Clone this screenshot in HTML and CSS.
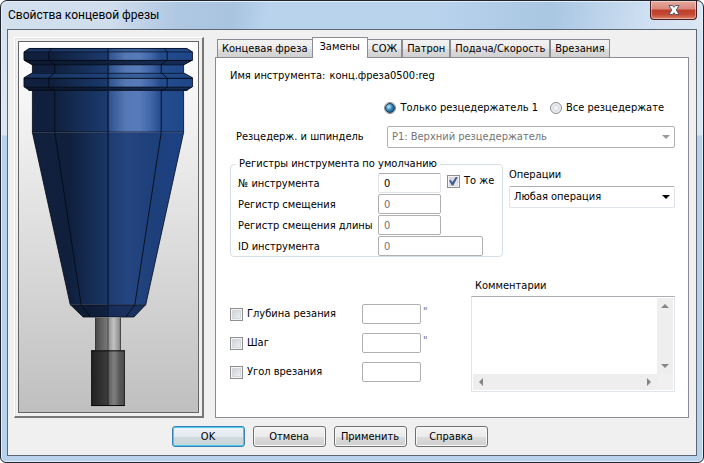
FILE: index.html
```html
<!DOCTYPE html>
<html lang="ru">
<head>
<meta charset="utf-8">
<title>Свойства концевой фрезы</title>
<link rel="stylesheet" href="styles.css">
</head>
<body>
<main class="window">
  <header class="titlebar">
    <h1 class="title">Свойства концевой фрезы</h1>
    <button class="close" type="button" aria-label="Закрыть">
      <svg width="12" height="10" viewBox="0 0 12 10"><path d="M1 .5h3.500L6 2.300 7.500 .5H11L8.300 5 11 9.500H7.500L6 7.700 4.500 9.500H1L3.700 5z" fill="#fff" stroke="#53586b" stroke-width="1"/></svg>
    </button>
  </header>
  <form class="client">
    <div class="content">
      <div class="viewer">
        <svg class="tool" viewBox="19 42 179 372" role="img" aria-label="Концевая фреза">
          <defs>
            <linearGradient id="body" gradientUnits="userSpaceOnUse" x1="24" y1="0" x2="193" y2="0">
              <stop offset="0" stop-color="#10203d"/><stop offset=".17" stop-color="#0f1f3d"/>
              <stop offset=".18" stop-color="#10213f"/><stop offset=".49" stop-color="#1b3a6e"/>
              <stop offset=".51" stop-color="#34558f"/><stop offset=".6" stop-color="#5478b4"/>
              <stop offset=".68" stop-color="#587cbb"/><stop offset=".76" stop-color="#3e63a5"/>
              <stop offset=".81" stop-color="#244b8c"/><stop offset=".83" stop-color="#234c8d"/>
              <stop offset="1" stop-color="#1e468a"/>
            </linearGradient>
            <linearGradient id="cone" gradientUnits="userSpaceOnUse" x1="32" y1="0" x2="184" y2="0">
              <stop offset="0" stop-color="#10203d"/><stop offset=".24" stop-color="#0f1f3c"/>
              <stop offset=".49" stop-color="#193564"/><stop offset=".52" stop-color="#1f3d73"/>
              <stop offset=".64" stop-color="#24457f"/><stop offset=".8" stop-color="#1d3f7a"/>
              <stop offset="1" stop-color="#1c4285"/>
            </linearGradient>
            <linearGradient id="shade" gradientUnits="userSpaceOnUse" x1="24" y1="0" x2="193" y2="0">
              <stop offset="0" stop-color="#0c182e"/><stop offset=".4" stop-color="#0e1c36"/>
              <stop offset=".65" stop-color="#16294d"/><stop offset="1" stop-color="#142c58"/>
            </linearGradient>
            <linearGradient id="shank" x1="0" x2="1" y1="0" y2="0">
              <stop offset="0" stop-color="#484848"/><stop offset=".46" stop-color="#777"/>
              <stop offset=".52" stop-color="#929292"/><stop offset=".72" stop-color="#c2c2c2"/>
              <stop offset="1" stop-color="#808080"/>
            </linearGradient>
            <linearGradient id="cutter" x1="0" x2="1" y1="0" y2="0">
              <stop offset="0" stop-color="#202020"/><stop offset=".47" stop-color="#3c3c3c"/>
              <stop offset=".53" stop-color="#606060"/><stop offset=".68" stop-color="#808080"/>
              <stop offset=".85" stop-color="#565656"/><stop offset="1" stop-color="#4c4c4c"/>
            </linearGradient>
          </defs>
          <path d="M29 48H187L193 52V60L184 65V73L193 78V87L187 90.500H184V133H32V90.500H29L23.500 87V78L32 73V65L23.500 60V52z" fill="url(#body)"/>
          <path d="M29 48H187L193 52H23.500zM32 73H184L193 78H23.500z" fill="#234985" opacity=".55"/>
          <path d="M23.500 60.500H193L184 65H32zM23.500 87H193L187 90.500H29z" fill="url(#shade)"/>
          <path d="M32 133H184L146 306H70z" fill="url(#cone)"/>
          <path d="M70 306H146L134 318.500H83z" fill="url(#shade)"/>
          <path d="M108 306H146L134 318.500H108z" fill="#1b3669" opacity=".65"/>
          <g fill="none" stroke="#050a14" stroke-width="1">
            <path d="M29 48.500H187L193 52V60L184 65V73L193 78V87L187 90.500H184V133L146 306 134 318.500H83L70 306 32 133V90.500H29L23.500 87V78L32 73V65L23.500 60V52z" stroke-opacity=".8"/>
            <path d="M24 60.500H193M24 78.500H193M28 90.500H188"/>
            <path d="M24 52H193M32 65H184M32 73.500H184M26 87.500H191M32 132.500H184M70 306.500H146" stroke-opacity=".65"/>
            <path d="M52 48L48.500 52V60L54.500 65V73L48.500 78V87L52 90.500H54.500V133L81 306 90 318.500M164 48L167.500 52V60L161.500 65V73L167.500 78V87L164 90.500H161.500V133L135 306 126 318.500" stroke-opacity=".85"/>
          </g>
          <path d="M108 48V318" stroke="#0c1c3a" stroke-width="2" opacity=".7"/>
          <rect x="95" y="319" width="26" height="33" fill="url(#shank)"/>
          <path d="M95.500 319V352M120.500 319V352M108 319V352" stroke="#303030" stroke-opacity=".8"/>
          <rect x="91" y="352" width="34" height="56" fill="url(#cutter)"/>
          <path d="M91 352.500H125M91 407.500H125" stroke="#080808"/>
          <path d="M91.500 352V408M124.500 352V408M108 352V408" stroke="#181818" stroke-opacity=".8"/>
        </svg>
      </div>
      <section class="pages">
        <div class="tabs" role="tablist">
          <button class="tab" type="button" role="tab">Концевая фреза</button>
          <button class="tab active" type="button" role="tab" aria-selected="true">Замены</button>
          <button class="tab" type="button" role="tab">СОЖ</button>
          <button class="tab" type="button" role="tab">Патрон</button>
          <button class="tab" type="button" role="tab">Подача/Скорость</button>
          <button class="tab" type="button" role="tab">Врезания</button>
        </div>
        <div class="panel" role="tabpanel">
          <p class="name"><span>Имя инструмента:</span><span>конц.фреза0500:reg</span></p>
          <div class="radios">
            <label class="choice"><input class="radio" type="radio" name="holder" checked>Только резцедержатель 1</label>
            <label class="choice"><input class="radio" type="radio" name="holder">Все резцедержате</label>
          </div>
          <div class="spindle">
            <label for="spindle">Резцедерж. и шпиндель</label>
            <span class="combo off"><select id="spindle" disabled><option>P1: Верхний резцедержатель</option></select></span>
          </div>
          <div class="middle">
            <fieldset class="group">
              <legend>Регистры инструмента по умолчанию</legend>
              <div class="registers">
                <label for="num">№ инструмента</label>
                <div class="pair">
                  <input class="field live" id="num" type="text" value="0">
                  <label class="choice"><input class="check" type="checkbox" checked>То же</label>
                </div>
                <label for="offset">Регистр смещения</label>
                <input class="field" id="offset" type="text" value="0" disabled>
                <label for="length">Регистр смещения длины</label>
                <input class="field" id="length" type="text" value="0" disabled>
                <label for="toolid">ID инструмента</label>
                <input class="field wide" id="toolid" type="text" value="0" disabled>
              </div>
            </fieldset>
            <div class="operations">
              <label for="operation">Операции</label>
              <span class="combo"><select id="operation"><option>Любая операция</option></select></span>
            </div>
          </div>
          <div class="lower">
            <div class="limits">
              <label class="choice"><input class="check" type="checkbox">Глубина резания</label>
              <div class="unit"><input class="field" type="text" aria-label="Глубина резания" disabled><span>"</span></div>
              <label class="choice"><input class="check" type="checkbox">Шаг</label>
              <div class="unit"><input class="field" type="text" aria-label="Шаг" disabled><span>"</span></div>
              <label class="choice"><input class="check" type="checkbox">Угол врезания</label>
              <div class="unit"><input class="field" type="text" aria-label="Угол врезания" disabled></div>
            </div>
            <div class="comments">
              <label for="comments">Комментарии</label>
              <div class="memo">
                <textarea id="comments"></textarea>
                <div class="bar vertical"><i class="arrow up"></i><i class="arrow down"></i></div>
                <div class="bar horizontal"><i class="arrow left"></i><i class="arrow right"></i></div>
                <div class="corner"></div>
              </div>
            </div>
          </div>
        </div>
      </section>
    </div>
    <footer class="buttons">
      <button class="button default" type="button">OK</button>
      <button class="button" type="button">Отмена</button>
      <button class="button" type="button">Применить</button>
      <button class="button" type="button">Справка</button>
    </footer>
  </form>
</main>
</body>
</html>
```
FILE: styles.css
```css
* { box-sizing: border-box; }

body {
  margin: 0;
  background: #fff;
  color: #000;
  font: 11px/16px "DejaVu Sans Condensed", Tahoma, sans-serif;
}

button, input, select, textarea { font: inherit; color: inherit; margin: 0; }

.window {
  display: flex;
  flex-direction: column;
  min-height: 100vh;
  padding: 0 6px 6px;
  border: 1px solid #20242c;
  border-radius: 7px 7px 6px 6px;
  background:
    linear-gradient(100deg, #d3e0ee 0, #cfddec 16%, #b0c8e2 25%, #a9c4df 33%, #b9d3ed 38%, #b9d3ed 62%, #a9c6e2 78%, #cfe0f2 92%, #dbe7f4 100%) top / 100% 29px no-repeat,
    linear-gradient(#d3e1f0 0, #dce7f2 134px, #b8d2ec 135px, #b8d2ec 100%);
  box-shadow: inset 0 0 0 1px #e4eef8;
}

.titlebar { display: flex; justify-content: space-between; height: 28px; }
.title { margin: 0; padding-left: 1px; font: 12px/28px Roboto, "Noto Sans", sans-serif; }
.close {
  display: grid;
  place-items: center;
  width: 47px;
  height: 19px;
  padding: 0;
  border: 1px solid #4c1d1f;
  border-top: 0;
  border-radius: 0 0 4px 4px;
  background: linear-gradient(#e6aa9e 0, #d8877a 45%, #bd3d29 50%, #c44a33 75%, #dc8265 100%);
  box-shadow: inset 0 0 0 1px rgba(255, 255, 255, .4);
}

.client {
  display: flex;
  flex: 1;
  flex-direction: column;
  gap: 8px;
  padding: 7px 7px 8px 6px;
  border: 1px solid #5b6773;
  background: #f0f0f0;
}
.content { display: flex; flex: 1; gap: 11px; }

.viewer {
  display: flex;
  width: 190px;
  padding: 3px;
  border: 1px solid #fff;
  border-right: 2px solid #777;
  border-bottom: 2px solid #777;
  box-shadow: inset 1px 1px 0 #e2e2e2;
}
.tool {
  flex: 1;
  min-width: 0;
  border: 1px solid #646464;
  background: linear-gradient(#fff, #bfbfbf);
  contain: size;
}

.pages { display: flex; flex: 1; flex-direction: column; min-width: 0; }
.tabs { display: flex; align-items: flex-end; height: 20px; padding-left: 2px; }
.tab {
  height: 18px;
  padding: 0 4px;
  border: 1px solid #898c95;
  border-bottom: 0;
  background: linear-gradient(#f3f3f3 0, #ebebeb 50%, #dedede 51%, #d0d0d0 100%);
  line-height: 16px;
  white-space: nowrap;
}
.tab.active { z-index: 1; height: 21px; margin: 0 -1px -1px; padding: 0 7px 3px; background: #fff; }

.panel {
  flex: 1;
  padding: 10px 13px 24px 14px;
  border: 1px solid #898c95;
  background: #fff;
}
.name { display: flex; gap: 4px; margin: 0 0 16px; }
.radios { display: flex; justify-content: flex-end; gap: 12px; margin: 0 11px 10px 0; }
.choice { display: flex; align-items: center; gap: 4px; white-space: nowrap; }

.radio {
  display: grid;
  place-items: center;
  width: 12px;
  height: 12px;
  border: 1px solid #858a8f;
  border-radius: 50%;
  background: radial-gradient(#fff 0, #d8dcdf 45%, #f5f5f5 65%);
  appearance: none;
}
.radio:checked::before {
  width: 8px;
  height: 8px;
  border: 1px solid #173a5a;
  border-radius: 50%;
  background: radial-gradient(circle at 35% 35%, #c9ebf8, #2780b4 50%, #123a62);
  content: "";
}
.check {
  display: grid;
  place-items: center;
  width: 13px;
  height: 13px;
  border: 1px solid #8e8f8f;
  background: linear-gradient(135deg, #c5cad2, #f6f6f6);
  box-shadow: inset 0 0 0 1px #f4f4f4, inset 0 0 0 2px #d4d7dc;
  appearance: none;
}
.check:checked::before {
  width: 9px;
  height: 9px;
  background: #3f5b96;
  clip-path: polygon(0 45%, 22% 40%, 38% 65%, 78% 0, 100% 0, 48% 100%, 32% 100%);
  content: "";
}

.spindle { display: flex; align-items: center; justify-content: space-between; margin-bottom: 9px; padding-left: 6px; }
.spindle .combo { width: 288px; }
.combo { position: relative; display: block; }
.combo select {
  display: block;
  width: 100%;
  height: 22px;
  padding: 0 4px;
  border: 1px solid #dfe3ea;
  border-top-color: #abadb3;
  border-radius: 2px;
  background: #fff;
  appearance: none;
}
.combo.off select { border-color: #b0b0b0; color: #747474; opacity: 1; }
.combo::after {
  position: absolute;
  top: 9px;
  right: 5px;
  border: 4px solid transparent;
  border-top-color: #000;
  border-bottom: 0;
  content: "";
}
.combo.off::after { border-top-color: #9a9a9a; }

.middle { display: flex; gap: 6px; }
.group {
  width: 273px;
  margin: 0;
  padding: 2px 6px 0 7px;
  border: 1px solid #d5dfe5;
  border-radius: 4px;
}
.group legend { margin-left: -2px; padding: 0 3px; line-height: 14px; }
.registers { display: grid; grid-template-columns: 140px 1fr; grid-auto-rows: 20px; row-gap: 1px; align-items: center; }
.registers > label { padding-top: 2px; }
.pair { display: flex; align-items: flex-start; gap: 6px; }
.field {
  width: 63px;
  height: 20px;
  padding: 0 5px;
  border: 1px solid #b0b0b0;
  border-radius: 2px;
  background: #fff;
  color: #747474;
}
.field.live { border-color: #dfe3ea; border-top-color: #abadb3; color: #000; }
.field.wide { width: 105px; }
.operations { flex: 1; padding-top: 10px; }
.operations label { display: block; margin-bottom: 3px; }

.lower { display: flex; justify-content: space-between; margin-top: 21px; }
.limits { display: grid; grid-template-columns: 132px auto; grid-auto-rows: 20px; align-content: start; row-gap: 9px; padding-top: 26px; }
.limits .field { width: 59px; }
.unit { display: flex; gap: 2px; color: #747474; }
.comments { width: 204px; }
.comments label { display: block; margin-bottom: 2px; padding-left: 4px; }
.memo {
  display: grid;
  grid-template: 1fr 16px / 1fr 16px;
  height: 96px;
  padding: 1px;
  border: 1px solid #dfe3ea;
  border-top-color: #abadb3;
}
.memo textarea { width: 100%; height: 100%; padding: 2px; border: 0; background: #fff; resize: none; }
.bar { display: flex; align-items: center; justify-content: space-between; background: #eee; }
.bar.vertical { flex-direction: column; padding: 6px 0; }
.bar.horizontal { padding: 0 6px; }
.corner { background: #f0f0f0; }
.arrow { border: 4px solid transparent; }
.up { border-top: 0; border-bottom-color: #858585; }
.down { border-bottom: 0; border-top-color: #858585; }
.left { border-left: 0; border-right-color: #858585; }
.right { border-right: 0; border-left-color: #858585; }

.buttons { display: flex; justify-content: center; gap: 8px; padding-right: 44px; }
.button {
  width: 73px;
  height: 21px;
  padding: 0;
  border: 1px solid #707070;
  border-radius: 3px;
  background: linear-gradient(#f3f3f3 0, #ebebeb 50%, #dcdcdc 51%, #cfcfcf 100%);
  box-shadow: inset 0 0 0 1px #f8f8f8;
}
.button.default { border-color: #3c7fb1; background: linear-gradient(#edf2f5 0, #e3eaee 50%, #d0d9de 51%, #c9d5da 100%); box-shadow: inset 0 0 0 1px #46cdf4; }
```
